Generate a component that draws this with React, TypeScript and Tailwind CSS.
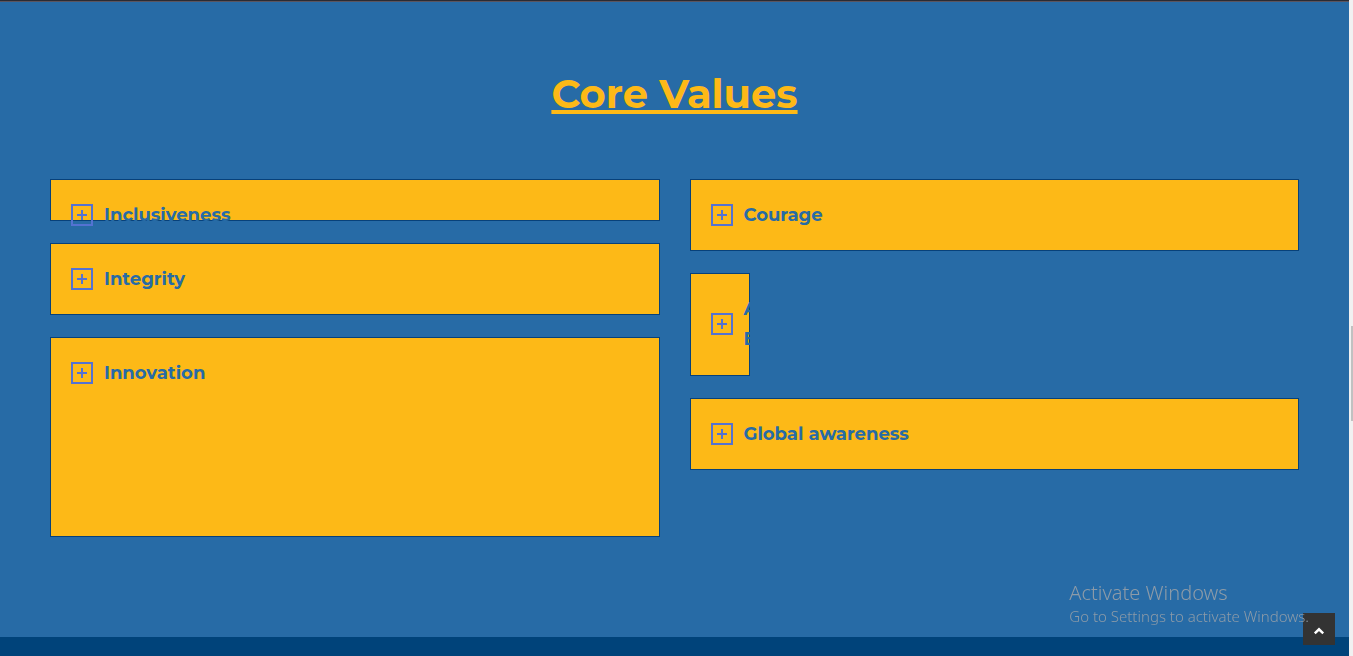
import React from "react";

type Value = { title: string; size: string };

const left: Value[] = [
  { title: "Inclusiveness", size: "h-[42px] items-start" },
  { title: "Integrity", size: "h-[72px] items-start" },
  { title: "Innovation", size: "h-[200px] items-start" },
];

const right: Value[] = [
  { title: "Courage", size: "h-[72px] items-start" },
  { title: "A E", size: "h-[103px] w-[60px] items-start" },
  { title: "Global awareness", size: "h-[72px] items-start" },
];

function PlusBox() {
  return (
    <svg viewBox="0 0 22 22" className="h-[22px] w-[22px] shrink-0" fill="none" stroke="#5472d2" strokeWidth="2" shapeRendering="crispEdges" aria-hidden="true">
      <rect x="1" y="1" width="20" height="20" />
      <path d="M6 11H16M11 6V16" />
    </svg>
  );
}

function ValueCard({ title, size }: Value) {
  return (
    <button type="button" aria-expanded="false" className={`flex border border-[#07417a] bg-[#fdb917] px-5 py-5 text-left ${size}`}>
      <span className="flex items-center gap-[11px]">
        <PlusBox />
        <span className="text-lg leading-[30px] font-bold text-[#276ba6]">{title}</span>
      </span>
    </button>
  );
}

export default function App() {
  return (
    <div className="flex h-screen overflow-hidden bg-[#f1f1f1] font-['Montserrat','Inter',sans-serif]">
      <main className="flex min-w-0 flex-1 flex-col bg-[#00437a]">
        <div className="h-[2px] shrink-0 border-b border-[#5a5560] bg-[#2b2b33]" />
        <section className="shrink-0 bg-[#276ba6] px-[50px] pt-[62px] pb-[100px]">
          <h2 className="text-center text-[40px] leading-[60px] font-bold text-[#fdb917] underline decoration-4 underline-offset-2">Core Values</h2>
          <div className="mt-[55px] grid grid-cols-2 gap-[30px]">
            <div className="flex flex-col gap-[22px]">
              {left.map((v) => <ValueCard key={v.title} {...v} />)}
            </div>
            <div className="flex flex-col gap-[22px]">
              {right.map((v) => <ValueCard key={v.title} {...v} />)}
            </div>
          </div>
        </section>
      </main>
      <div className="flex w-1 shrink-0 flex-col items-end bg-[#f1f1f1] pt-[326px]">
        <div className="h-[95px] w-[2px] bg-[#c1c1c1]" />
      </div>
      <button type="button" aria-label="Back to top" className="fixed right-[18px] bottom-[11px] flex h-8 w-8 items-center justify-center bg-[#333333]">
        <svg viewBox="0 0 12 8" className="mt-1 h-2 w-3" fill="none" stroke="#ffffff" strokeWidth="2.4" aria-hidden="true">
          <path d="M1.8 6.4L6 2.3L10.2 6.4" />
        </svg>
      </button>
      <div className="pointer-events-none fixed right-[44px] bottom-[31px] font-['Noto_Sans',sans-serif] text-[#8d9ba8]">
        <p className="text-xl leading-7 font-light">Activate Windows</p>
        <p className="text-[15px] leading-[18px] font-light">Go to Settings to activate Windows.</p>
      </div>
    </div>
  );
}
